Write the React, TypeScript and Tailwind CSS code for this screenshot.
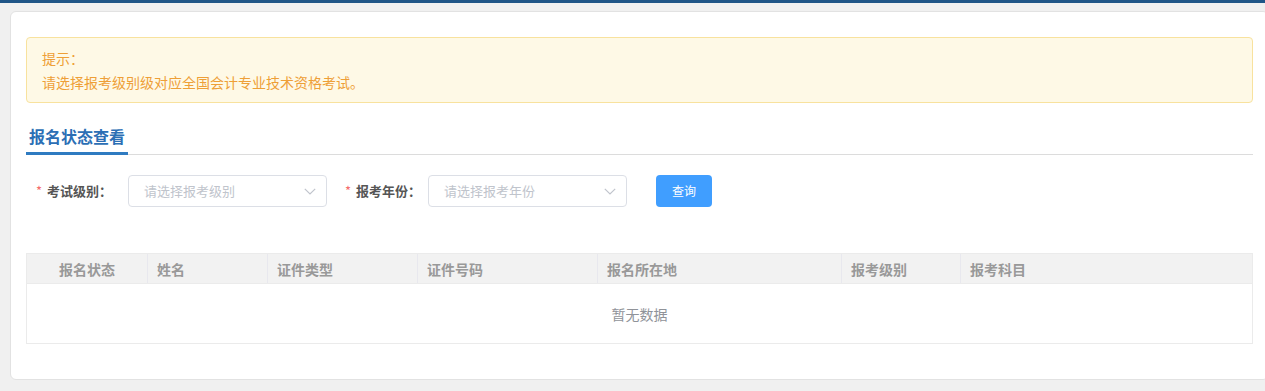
import React from 'react';

const font = { fontFamily: '"Noto Sans CJK SC", "Liberation Sans", sans-serif' };

const columns = [
    { title: '报名状态', center: true },
    { title: '姓名' },
    { title: '证件类型' },
    { title: '证件号码' },
    { title: '报名所在地' },
    { title: '报考级别' },
    { title: '报考科目' },
];

const Chevron = () => (
    <svg width="12" height="7" viewBox="0 0 12 7" fill="none">
        <path d="M0.8 0.8 L6 6 L11.2 0.8" stroke="#c0c4cc" strokeWidth="1.2" />
    </svg>
);

const SelectBox = ({ placeholder }: { placeholder: string }) => (
    <div className="flex h-8 w-[199px] shrink-0 items-center justify-between rounded border border-[#dcdfe6] bg-white pl-[15px] pr-[10px]">
        <span className="text-[13px] text-[#c0c4cc]">{placeholder}</span>
        <Chevron />
    </div>
);

const FieldLabel = ({ text, className }: { text: string; className: string }) => (
    <label className={`flex shrink-0 items-center text-[13px] font-bold text-[#555] ${className}`}>
        <span className="mr-[5px] font-normal text-[#f56c6c]">*</span>
        {text}：
    </label>
);

export default function App() {
    return (
        <div className="min-h-screen overflow-hidden bg-[#f0f0f0]" style={font}>
            <div className="h-[3px] bg-[#1f5587]" />
            <div className="pl-[10px] pt-[8px]">
                <div className="w-[1259px] rounded-md border border-[#e2e2e2] bg-white px-[15px] pb-[35px] pt-[25px]">
                    {/* 提示 */}
                    <div className="rounded border border-[#f8e29e] bg-[#fef9e6] px-[15px] py-2 text-sm leading-6 text-[#ee9f37]">
                        <p>提示：</p>
                        <p>请选择报考级别级对应全国会计专业技术资格考试。</p>
                    </div>

                    {/* 标题 */}
                    <div className="mt-[21px] flex border-b border-[#dcdcdc]">
                        <span className="-mb-px border-b-[3px] border-[#2f7bc1] pb-1 pl-[3px] pr-[3px] text-base font-bold leading-6 text-[#2c6fb5]">
                            报名状态查看
                        </span>
                    </div>

                    {/* 查询条件 */}
                    <div className="mt-[20px] flex items-center">
                        <FieldLabel text="考试级别" className="w-[102px] pl-[10px]" />
                        <SelectBox placeholder="请选择报考级别" />
                        <FieldLabel text="报考年份" className="w-[101px] pl-[18px]" />
                        <SelectBox placeholder="请选择报考年份" />
                        <button className="ml-[29px] h-8 w-14 rounded bg-[#409eff] text-xs text-white">查询</button>
                    </div>

                    {/* 列表 */}
                    <div className="mt-[46px] border border-[#ebebeb]">
                        <div className="grid h-[29px] grid-cols-[120px_120px_150px_180px_244px_119px_1fr] bg-[#f2f2f2]">
                            {columns.map((c, i) => (
                                <div
                                    key={i}
                                    className={`flex items-center text-sm font-bold text-[#999] ${i > 0 ? 'border-l border-[#e8e8ee] pl-[9px]' : ''} ${c.center ? 'justify-center' : ''}`}
                                >
                                    {c.title}
                                </div>
                            ))}
                        </div>
                        <div className="flex h-[60px] items-center justify-center border-t border-[#ebebeb] text-sm text-[#909399]">
                            暂无数据
                        </div>
                    </div>
                </div>
            </div>
        </div>
    );
}
